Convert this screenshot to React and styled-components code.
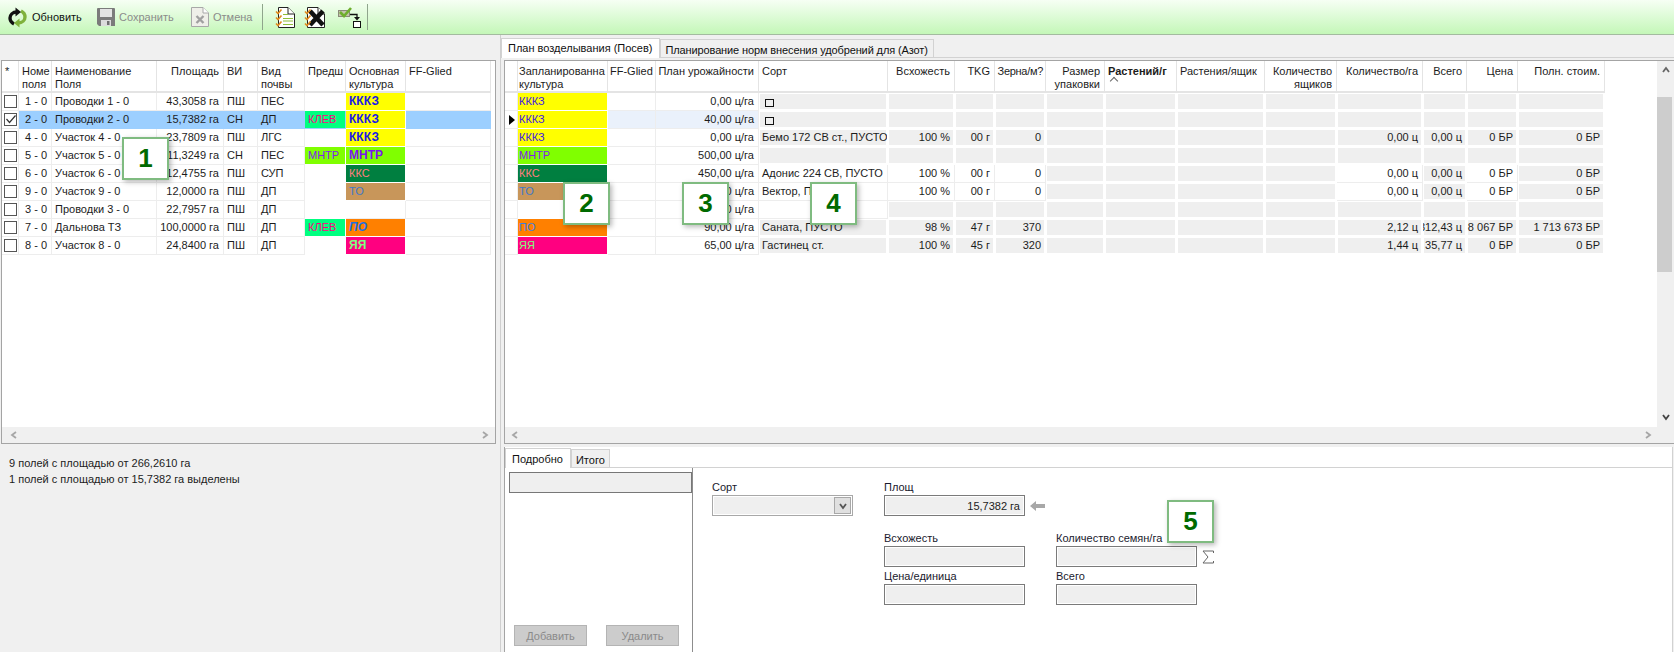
import React from 'react';
import styled, { createGlobalStyle } from 'styled-components';

const GlobalStyle = createGlobalStyle`
  html, body {
    margin: 0;
    padding: 0;
    background: #f0f0f0;
  }
  * {
    box-sizing: border-box;
  }
`

const LEFT_COLS = '17px 33px 105px 67px 34px 47px 41px 60px 85px';
const RIGHT_COLS = '13px 90px 48px 103px 129px 67px 40px 51px 59px 72px 88px 72px 86px 44px 51px 87px';

const Page = styled.div`
  position: relative;
  width: 1674px;
  height: 652px;
  overflow: hidden;
  display: flex;
  flex-direction: column;
  background: #f0f0f0;
  font-family: "Liberation Sans", Arial, sans-serif;
  font-size: 11px;
  color: #1c1c1c;
`

const Toolbar = styled.div`
  height: 35px;
  flex: none;
  display: flex;
  align-items: center;
  padding-left: 7px;
  background: linear-gradient(#f6fff4, #c4f7b8);
  border-bottom: 1px solid #a3bb9f;
`

const ToolButton = styled.div`
  display: flex;
  align-items: center;
  gap: 4px;
  width: ${p => p.$width}px;
  color: ${p => (p.$off ? '#8b8b8b' : '#111')};
`

const ToolSep = styled.div`
  width: 1px;
  height: 26px;
  background: #8fa58c;
  margin: ${p => p.$margin || 0};
`

const ToolIcon = styled.div`
  display: flex;
  width: ${p => p.$width}px;
`

const Body = styled.div`
  flex: 1;
  display: flex;
  min-height: 0;
`

const LeftPane = styled.div`
  width: 500px;
  flex: none;
  padding: 25px 4px 0 1px;
`

const RightPane = styled.div`
  flex: 1;
  display: flex;
  flex-direction: column;
  padding-top: 2px;
  border-left: 1px solid #cfcfcf;
`

const TabStrip = styled.div`
  display: flex;
  align-items: flex-end;
  height: ${p => p.$height}px;
  flex: none;
  border-bottom: 1px solid #d2d2d2;
  margin-bottom: ${p => p.$after || 0}px;
`

const Tab = styled.div`
  height: ${p => (p.$active ? '100%' : 'calc(100% - 2px)')};
  padding: ${p => p.$pad};
  line-height: 16px;
  white-space: nowrap;
  letter-spacing: ${p => p.$tight || 0}px;
  border: 1px solid #d2d2d2;
  border-bottom: none;
  background: ${p => (p.$active ? '#fff' : '#f0f0f0')};
  color: #111;
  margin-bottom: ${p => (p.$active ? '-1px' : '0')};
`

const GridFrame = styled.div`
  height: 384px;
  flex: none;
  display: flex;
  flex-direction: column;
  margin-left: ${p => p.$left || 0}px;
  border-top: 1px solid #a4a4a4;
  border-left: 1px solid #a4a4a4;
  border-bottom: 1px solid #a4a4a4;
  border-right: ${p => (p.$open ? 'none' : '1px solid #a4a4a4')};
`

const GridMain = styled.div`
  flex: 1;
  display: flex;
  min-height: 0;
  background: #fff;
`

const GridRows = styled.div`
  flex: 1;
  min-width: 0;
`

const Row = styled.div`
  display: grid;
  grid-template-columns: ${p => p.$cols};
  height: ${p => (p.$head ? 32 : 18)}px;
  width: max-content;
`

const HeadCell = styled.div`
  position: relative;
  display: flex;
  justify-content: ${p => (p.$align === 'right' ? 'flex-end' : 'flex-start')};
  padding: 4px ${p => (p.$tight ? 2 : 4)}px 0 ${p => (p.$align === 'right' ? 0 : p.$inset ?? 3)}px;
  line-height: 13px;
  white-space: pre;
  overflow: hidden;
  letter-spacing: ${p => p.$tight || 0}px;
  text-align: ${p => p.$align || 'left'};
  font-weight: ${p => (p.$bold ? 700 : 400)};
  border-right: 1px solid #e4e4e4;
  border-bottom: 2px solid #e4e4e4;
  ${p => p.$bold && `
    &::after {
      content: '';
      position: absolute;
      left: 6px;
      top: 17px;
      width: 5px;
      height: 5px;
      border-left: 1px solid #666;
      border-top: 1px solid #666;
      transform: rotate(45deg);
    }
  `}
`

const Cell = styled.div`
  display: flex;
  align-items: center;
  justify-content: ${p => (p.$align === 'right' ? 'flex-end' : 'flex-start')};
  padding: 0 4px 0 ${p => p.$inset ?? 3}px;
  white-space: nowrap;
  overflow: hidden;
  line-height: 17px;
  background: ${p => p.$bg || 'transparent'};
  color: ${p => p.$ink || '#1c1c1c'};
  font-weight: ${p => (p.$bold ? 700 : 400)};
  font-style: ${p => (p.$italic ? 'italic' : 'normal')};
  font-size: ${p => (p.$bold ? '12px' : '11px')};
  border-right: 1px solid ${p => p.$line || '#ededed'};
  border-bottom: 1px solid ${p => p.$line || '#ededed'};
`

const GrayCell = styled(Cell)`
  background: #efefef;
  border-right: 1px solid #fff;
  border-bottom: 1px solid #fff;
  box-shadow: 0 0 0 1px #fff inset;
`

const CheckBox = styled.div`
  width: 13px;
  height: 13px;
  margin: 2px 0 0 2px;
  border: 1px solid #555;
  background: #fff;
  display: flex;
  color: #333;
`

const CheckCell = styled.div`
  background: #fff;
  border-right: 1px solid #ededed;
  border-bottom: 1px solid #ededed;
`

const Indicator = styled.div`
  display: flex;
  align-items: center;
  padding-left: 4px;
  border-right: 1px solid #ededed;
  border-bottom: 1px solid #ededed;
  &::before {
    content: '';
    display: ${p => (p.$on ? 'block' : 'none')};
    border-left: 6px solid #000;
    border-top: 5px solid transparent;
    border-bottom: 5px solid transparent;
  }
`

const EmptyMark = styled.span`
  width: 9px;
  height: 8px;
  margin: 2px 0 0 3px;
  border: 1px solid #111;
`

const VScroll = styled.div`
  width: 17px;
  flex: none;
  display: flex;
  flex-direction: column;
  align-items: center;
  justify-content: space-between;
  background: #f0f0f0;
  padding: 5px 0 6px;
`

const HScroll = styled.div`
  height: 16px;
  flex: none;
  display: flex;
  align-items: center;
  justify-content: space-between;
  background: #f0f0f0;
  padding: ${p => p.$pad};
`

const Thumb = styled.div`
  position: absolute;
  right: 2px;
  top: 97px;
  width: 15px;
  height: 175px;
  background: #cdcdcd;
`

const Status = styled.div`
  padding: 11px 0 0 8px;
  line-height: 16px;
  color: #1c1c1c;
`

const Detail = styled.div`
  flex: 1;
  display: flex;
  flex-direction: column;
  margin: 3px 1px 0 3px;
  background: #fff;
  border-left: 1px solid #a4a4a4;
  border-right: 1px solid #d2d2d2;
  min-height: 0;
`

const DetailBody = styled.div`
  flex: 1;
  display: flex;
  min-height: 0;
`

const ListPanel = styled.div`
  width: 188px;
  flex: none;
  display: flex;
  flex-direction: column;
  justify-content: space-between;
  padding: 4px 0 6px 4px;
  border-right: 1px solid #8d8d8d;
`

const ListHead = styled.div`
  height: 21px;
  background: #efefef;
  border: 1px solid #777;
`

const ButtonRow = styled.div`
  display: flex;
  gap: 19px;
  padding-left: 5px;
`

const OffButton = styled.div`
  width: 73px;
  height: 21px;
  display: flex;
  align-items: center;
  justify-content: center;
  background: #cccccc;
  border: 1px solid #b4b4b4;
  color: #8a8a8a;
`

const Form = styled.div`
  display: grid;
  grid-template-columns: 141px 141px 141px;
  grid-template-rows: 35px 35px 35px;
  column-gap: 31px;
  row-gap: 15px;
  padding: 13px 0 0 19px;
  align-content: start;
`

const Field = styled.div`
  grid-column: ${p => p.$col};
  grid-row: ${p => p.$row};
  margin-top: ${p => p.$shift || 0}px;
`

const FieldLabel = styled.div`
  height: 14px;
  line-height: 13px;
  color: #1a1a2e;
`

const InputRow = styled.div`
  display: flex;
  align-items: center;
  gap: 5px;
  width: max-content;
`

const ValueBox = styled.div`
  width: 141px;
  height: 21px;
  display: flex;
  align-items: center;
  justify-content: flex-end;
  padding-right: 4px;
  background: #efefef;
  border: 1px solid ${p => (p.$soft ? '#a8a8a8' : '#7a7a7a')};
  box-shadow: 0 0 0 1px #fff inset;
`

const ComboButton = styled.div`
  width: 17px;
  height: 17px;
  margin-right: -3px;
  display: flex;
  align-items: center;
  justify-content: center;
  background: #e0e0e0;
  border: 1px solid #a8a8a8;
`

const Callout = styled.div`
  position: absolute;
  left: ${p => p.$x}px;
  top: ${p => p.$y}px;
  width: 47px;
  height: 43px;
  display: flex;
  align-items: center;
  justify-content: center;
  background: #fff;
  border: 2px solid #7fbb80;
  box-shadow: 2px 2px 5px rgba(0, 0, 0, 0.28);
  font-size: 26px;
  font-weight: 700;
  color: #006a00;
`

const RefreshIcon = () => (
  <svg width="21" height="21" viewBox="0 0 21 21">
    <g fill="none" strokeWidth="3.4">
      <path d="M10 5 C5.5 5 3 8 3 11 C3 14 5 16 7 17" stroke="#111" />
      <path d="M11 16 C15.5 16 18 13 18 10 C18 7 16 5 14 4" stroke="#7fb23c" />
    </g>
    <polygon points="8.5,0.5 14,5 8.5,9.5" fill="#111" />
    <polygon points="12.5,11.5 7,16 12.5,20.5" fill="#7fb23c" />
  </svg>
);

const SaveIcon = () => (
  <svg width="18" height="18" viewBox="0 0 18 18">
    <path d="M0 1 Q0 0 1 0 H17 Q18 0 18 1 V18 H2 L0 16 Z" fill="#7b7b7b" />
    <rect x="3" y="1" width="12" height="8" fill="#e4e4e4" />
    <rect x="4" y="12" width="10" height="6" fill="#dcdcdc" />
    <rect x="10" y="13" width="2.5" height="4" fill="#6f6f6f" />
  </svg>
);

const CancelIcon = () => (
  <svg width="18" height="20" viewBox="0 0 18 20">
    <path d="M0.5 0.5 H12 L17.5 6 V19.5 H0.5 Z" fill="#efefe9" stroke="#a8a8a8" />
    <path d="M12 0.5 V6 H17.5" fill="#fff" stroke="#a8a8a8" />
    <path d="M5.5 9 L12.5 16 M12.5 9 L5.5 16" stroke="#a0a0a0" strokeWidth="2.4" />
  </svg>
);

const Checks = () => (
  <g fill="none" stroke="#e08a1e" strokeWidth="1.6">
    <path d="M1 4.5 L3 6.5 L6.5 2.5" />
    <path d="M1 10.5 L3 12.5 L6.5 8.5" />
    <path d="M1 16.5 L3 18.5 L6.5 14.5" />
  </g>
);

const ListIcon = () => (
  <svg width="20" height="21" viewBox="0 0 20 21">
    <path d="M3.5 0.5 H13 L19.5 7 V20.5 H3.5 Z" fill="#fff" stroke="#222" />
    <path d="M13 0.5 V7 H19.5" fill="#fff" stroke="#222" />
    <path d="M8 7.5 H13 M8 11.5 H18 M8 14 H18 M8 17.5 H18" stroke="#8fbf3a" strokeWidth="1.2" />
    <Checks />
  </svg>
);

const ListCrossIcon = () => (
  <svg width="21" height="21" viewBox="0 0 21 21">
    <path d="M3.5 0.5 H14 L20.5 7 V20.5 H3.5 Z" fill="#fff" stroke="#222" />
    <path d="M14 0.5 V7 H20.5" fill="#fff" stroke="#222" />
    <path d="M6 4 L19 18 M19 4 L6 18" stroke="#111" strokeWidth="4.6" />
    <Checks />
  </svg>
);

const MoveIcon = () => (
  <svg width="24" height="22" viewBox="0 0 24 22">
    <rect x="0.5" y="4.5" width="11" height="6" fill="#c4c4ae" stroke="#8a8a7a" />
    <path d="M2 6 L6 10 L13 2" fill="none" stroke="#6fae2e" strokeWidth="2.6" />
    <path d="M12 8.5 H19 V12" fill="none" stroke="#111" strokeWidth="1.3" />
    <polygon points="16,11 22,11 19,14.5" fill="#111" />
    <rect x="15.5" y="15.5" width="7" height="6" fill="#fff" stroke="#111" />
  </svg>
);

const Tick = () => (
  <svg width="11" height="11" viewBox="0 0 11 11">
    <path d="M1.5 5 L4.5 8.5 L10.5 1.5" fill="none" stroke="#333" strokeWidth="1.2" />
  </svg>
);

const Chevron = ({ dir, color = '#a6a6a6', size = 8 }) => {
  const paths = {
    left: 'M6 1 L2 4 L6 7',
    right: 'M2 1 L6 4 L2 7',
    up: 'M1 6 L4 2 L7 6',
    down: 'M1 2 L4 6 L7 2',
  };
  return (
    <svg width={size} height={size} viewBox="0 0 8 8">
      <path d={paths[dir]} fill="none" stroke={color} strokeWidth="1.8" />
    </svg>
  );
};

const cultures = {
  kkkz: { label: 'КККЗ', bg: '#ffff00', ink: '#1a1ae6', soft: '#3f20e0', bold: true },
  mntr: { label: 'МНТР', bg: '#80ff00', ink: '#7a16f0', soft: '#8020f0', bold: true },
  kks: { label: 'ККС', bg: '#007f40', ink: '#ff8080', soft: '#ff8080' },
  to: { label: 'ТО', bg: '#c8965a', ink: '#4078c8', soft: '#4078c8' },
  po: { label: 'ПО', bg: '#ff8000', ink: '#1f6fe0', soft: '#3f7fe0', italic: true, bold: true },
  ya: { label: 'ЯЯ', bg: '#ff0080', ink: '#80ff80', soft: '#80ff80', bold: true },
};

const leftHead = [
  { text: '*' },
  { text: 'Номе\nполя' },
  { text: 'Наименование\nПоля' },
  { text: 'Площадь', align: 'right' },
  { text: 'ВИ' },
  { text: 'Вид\nпочвы' },
  { text: 'Предш' },
  { text: 'Основная\nкультура' },
  { text: 'FF-Glied' },
];

const fields = [
  { no: '1 - 0', name: 'Проводки 1 - 0', area: '43,3058 га', vi: 'ПШ', soil: 'ПЕС', crop: 'kkkz' },
  { no: '2 - 0', name: 'Проводки 2 - 0', area: '15,7382 га', vi: 'СН', soil: 'ДП', prev: 'КЛЕВ', crop: 'kkkz', checked: true },
  { no: '4 - 0', name: 'Участок 4 - 0', area: '23,7809 га', vi: 'ПШ', soil: 'ЛГС', crop: 'kkkz' },
  { no: '5 - 0', name: 'Участок 5 - 0', area: '11,3249 га', vi: 'СН', soil: 'ПЕС', prev: 'МНТР', crop: 'mntr' },
  { no: '6 - 0', name: 'Участок 6 - 0', area: '12,4755 га', vi: 'ПШ', soil: 'СУП', crop: 'kks' },
  { no: '9 - 0', name: 'Участок 9 - 0', area: '12,0000 га', vi: 'ПШ', soil: 'ДП', crop: 'to' },
  { no: '3 - 0', name: 'Проводки 3 - 0', area: '22,7957 га', vi: 'ПШ', soil: 'ДП' },
  { no: '7 - 0', name: 'Дальнова ТЗ', area: '100,0000 га', vi: 'ПШ', soil: 'ДП', prev: 'КЛЕВ', crop: 'po' },
  { no: '8 - 0', name: 'Участок 8 - 0', area: '24,8400 га', vi: 'ПШ', soil: 'ДП', crop: 'ya' },
];

const rightHead = [
  { text: '' },
  { text: 'Запланированна\nкультура', inset: 1 },
  { text: 'FF-Glied', inset: 2 },
  { text: 'План урожайности', align: 'right' },
  { text: 'Сорт' },
  { text: 'Всхожесть', align: 'right' },
  { text: 'TKG', align: 'right' },
  { text: 'Зерна/м?', align: 'right', tight: -0.3 },
  { text: 'Размер\nупаковки', align: 'right' },
  { text: 'Растений/г', bold: true },
  { text: 'Растения/ящик' },
  { text: 'Количество\nящиков', align: 'right' },
  { text: 'Количество/га', align: 'right' },
  { text: 'Всего', align: 'right' },
  { text: 'Цена', align: 'right' },
  { text: 'Полн. стоим.', align: 'right' },
];

const plans = [
  { crop: 'kkkz', plan: '0,00 ц/га', mark: true },
  { crop: 'kkkz', plan: '40,00 ц/га', mark: true, current: true },
  { crop: 'kkkz', plan: '0,00 ц/га', sort: 'Бемо 172 СВ ст., ПУСТО', vs: '100 %', tkg: '00 г', grain: '0', qty: '0,00 ц', total: '0,00 ц', price: '0 БР', cost: '0 БР' },
  { crop: 'mntr', plan: '500,00 ц/га' },
  { crop: 'kks', plan: '450,00 ц/га', sort: 'Адонис 224 СВ, ПУСТО', vs: '100 %', tkg: '00 г', grain: '0', qty: '0,00 ц', total: '0,00 ц', price: '0 БР', cost: '0 БР', open: true },
  { crop: 'to', plan: '80,00 ц/га', sort: 'Вектор, ПУСТО', vs: '100 %', tkg: '00 г', grain: '0', qty: '0,00 ц', total: '0,00 ц', price: '0 БР', cost: '0 БР', open: true },
  { plan: '80,00 ц/га', blankSort: true },
  { crop: 'po', plan: '90,00 ц/га', sort: 'Саната, ПУСТО', vs: '98 %', tkg: '47 г', grain: '370', qty: '2,12 ц', total: '312,43 ц', price: '8 067 БР', cost: '1 713 673 БР' },
  { crop: 'ya', plan: '65,00 ц/га', sort: 'Гастинец ст.', vs: '100 %', tkg: '45 г', grain: '320', qty: '1,44 ц', total: '35,77 ц', price: '0 БР', cost: '0 БР' },
];

const LeftRow = ({ field }) => {
  const crop = cultures[field.crop];
  const bg = field.checked ? '#9ccfff' : undefined;
  const line = field.checked ? '#9ccfff' : undefined;
  const prevInk = field.prev === 'МНТР' ? '#8020f0' : '#ff0080';
  const prevBg = field.prev === 'МНТР' ? '#80ff00' : '#00ff80';
  return (
    <Row $cols={LEFT_COLS}>
      <CheckCell>
        <CheckBox>{field.checked && <Tick />}</CheckBox>
      </CheckCell>
      <Cell $bg={bg} $line={line} $align="right">{field.no}</Cell>
      <Cell $bg={bg} $line={line}>{field.name}</Cell>
      <Cell $bg={bg} $line={line} $align="right">{field.area}</Cell>
      <Cell $bg={bg} $line={line}>{field.vi}</Cell>
      <Cell $bg={bg} $line={line}>{field.soil}</Cell>
      <Cell $bg={field.prev ? prevBg : bg} $ink={prevInk} $line={line || '#fff'}>{field.prev}</Cell>
      {crop ? (
        <Cell $bg={crop.bg} $ink={crop.ink} $bold={crop.bold} $italic={crop.italic} $line="#fff">{crop.label}</Cell>
      ) : (
        <Cell $bg={bg} $line={line} />
      )}
      <Cell $bg={bg} $line={line} />
    </Row>
  );
};

const Fixed = ({ open, children }) => {
  const Comp = open ? Cell : GrayCell;
  return <Comp $align="right">{children}</Comp>;
};

const RightRow = ({ row }) => {
  const crop = cultures[row.crop];
  const rowBg = row.current ? '#eaf1fb' : undefined;
  const SortCell = row.open || row.blankSort ? Cell : GrayCell;
  return (
    <Row $cols={RIGHT_COLS}>
      <Indicator $on={row.current} />
      {crop ? (
        <Cell $bg={crop.bg} $ink={crop.soft} $line="#fff" $inset={1}>{crop.label}</Cell>
      ) : (
        <Cell $line="#fff" />
      )}
      <Cell $bg={rowBg} />
      <Cell $bg={rowBg} $align="right">{row.plan}</Cell>
      <SortCell>{row.mark ? <EmptyMark /> : row.sort}</SortCell>
      <Fixed open={row.open}>{row.vs}</Fixed>
      <Fixed open={row.open}>{row.tkg}</Fixed>
      <Fixed open={row.open}>{row.grain}</Fixed>
      <GrayCell />
      <GrayCell />
      <GrayCell />
      <GrayCell />
      <Fixed open={row.open}>{row.qty}</Fixed>
      <GrayCell $align="right">{row.total}</GrayCell>
      <Fixed open={row.open}>{row.price}</Fixed>
      <GrayCell $align="right">{row.cost}</GrayCell>
    </Row>
  );
};

const App = () => {
  return (
    <Page>
      <GlobalStyle />
      <Toolbar>
        <ToolButton $width={90}><RefreshIcon />Обновить</ToolButton>
        <ToolButton $width={94} $off><SaveIcon />Сохранить</ToolButton>
        <ToolButton $width={71} $off><CancelIcon />Отмена</ToolButton>
        <ToolSep $margin="0 12px 0 0" />
        <ToolIcon $width={29}><ListIcon /></ToolIcon>
        <ToolIcon $width={34}><ListCrossIcon /></ToolIcon>
        <ToolIcon $width={29}><MoveIcon /></ToolIcon>
        <ToolSep />
      </Toolbar>

      <Body>
        <LeftPane>
          <GridFrame>
            <GridMain>
              <GridRows>
                <Row $cols={LEFT_COLS} $head>
                  {leftHead.map(h => (
                    <HeadCell key={h.text} $align={h.align}>{h.text}</HeadCell>
                  ))}
                </Row>
                {fields.map(f => <LeftRow key={f.no} field={f} />)}
              </GridRows>
            </GridMain>
            <HScroll $pad="0 6px 0 8px">
              <Chevron dir="left" />
              <Chevron dir="right" />
            </HScroll>
          </GridFrame>
          <Status>
            9 полей с площадью от 266,2610 га<br />
            1 полей с площадью от 15,7382 га выделены
          </Status>
        </LeftPane>

        <RightPane>
          <TabStrip $height={21} $after={2}>
            <Tab $active $pad="1px 7px 0 6px">План возделывания (Посев)</Tab>
            <Tab $pad="2px 5px 0 4px" $tight={-0.12}>Планирование норм внесения удобрений для (Азот)</Tab>
          </TabStrip>
          <GridFrame $left={3} $open>
            <GridMain>
              <GridRows>
                <Row $cols={RIGHT_COLS} $head>
                  {rightHead.map(h => (
                    <HeadCell key={h.text} $align={h.align} $bold={h.bold} $inset={h.inset} $tight={h.tight}>{h.text}</HeadCell>
                  ))}
                </Row>
                {plans.map((r, i) => <RightRow key={i} row={r} />)}
              </GridRows>
              <VScroll>
                <Chevron dir="up" color="#666" />
                <Chevron dir="down" color="#444" />
              </VScroll>
            </GridMain>
            <HScroll $pad="0 22px 0 6px">
              <Chevron dir="left" />
              <Chevron dir="right" />
            </HScroll>
          </GridFrame>

          <Detail>
            <TabStrip $height={21}>
              <Tab $active $pad="2px 7px 0 6px">Подробно</Tab>
              <Tab $pad="2px 4px 0 4px">Итого</Tab>
            </TabStrip>
            <DetailBody>
              <ListPanel>
                <ListHead />
                <ButtonRow>
                  <OffButton>Добавить</OffButton>
                  <OffButton>Удалить</OffButton>
                </ButtonRow>
              </ListPanel>
              <Form>
                <Field $col={1} $row={1}>
                  <FieldLabel>Сорт</FieldLabel>
                  <ValueBox $soft>
                    <ComboButton><Chevron dir="down" color="#555" /></ComboButton>
                  </ValueBox>
                </Field>
                <Field $col={2} $row={1}>
                  <FieldLabel>Площ</FieldLabel>
                  <InputRow>
                    <ValueBox>15,7382 га</ValueBox>
                    <svg width="15" height="10" viewBox="0 0 15 10">
                      <path d="M0 5 L6 0 V3 H15 V7 H6 V10 Z" fill="#a8a8a8" />
                    </svg>
                  </InputRow>
                </Field>
                <Field $col={2} $row={2} $shift={1}>
                  <FieldLabel>Всхожесть</FieldLabel>
                  <ValueBox />
                </Field>
                <Field $col={3} $row={2} $shift={1}>
                  <FieldLabel>Количество семян/га</FieldLabel>
                  <InputRow>
                    <ValueBox />
                    <svg width="12" height="14" viewBox="0 0 12 14">
                      <path d="M11.5 3 V1 H1 L6 7 L1 13 H11.5 V11" fill="none" stroke="#666" />
                    </svg>
                  </InputRow>
                </Field>
                <Field $col={2} $row={3} $shift={-11}>
                  <FieldLabel>Цена/единица</FieldLabel>
                  <ValueBox />
                </Field>
                <Field $col={3} $row={3} $shift={-11}>
                  <FieldLabel>Всего</FieldLabel>
                  <ValueBox />
                </Field>
              </Form>
            </DetailBody>
          </Detail>
        </RightPane>
      </Body>

      <Thumb />
      <Callout $x={122} $y={137}>1</Callout>
      <Callout $x={563} $y={182}>2</Callout>
      <Callout $x={682} $y={182}>3</Callout>
      <Callout $x={810} $y={182}>4</Callout>
      <Callout $x={1167} $y={500}>5</Callout>
    </Page>
  );
};

export default App;
